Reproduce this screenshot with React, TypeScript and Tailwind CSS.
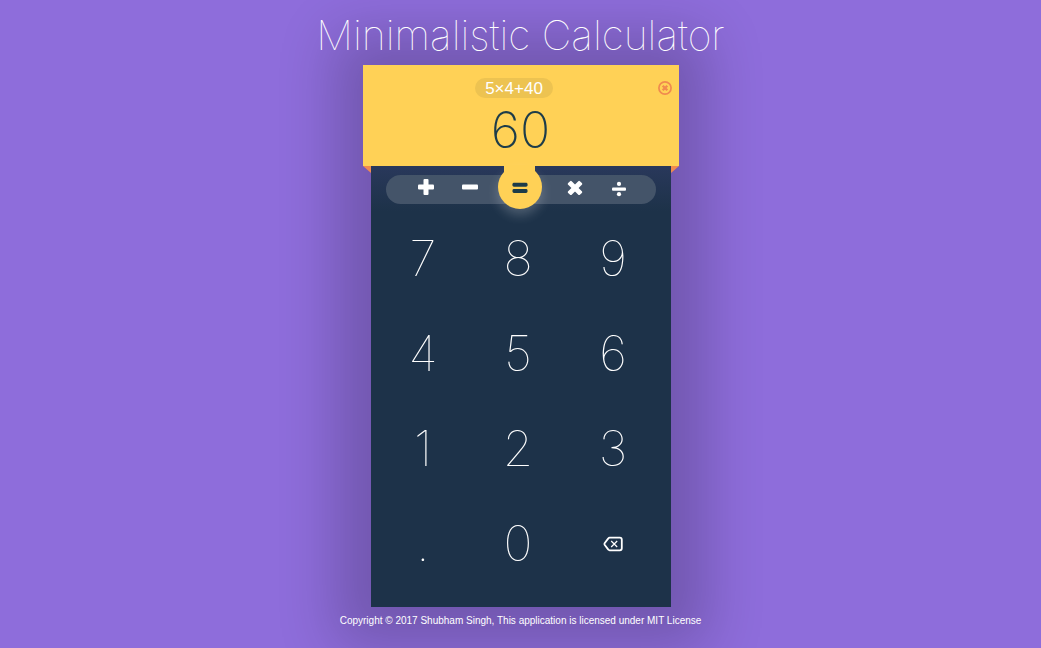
import { useState } from "react";

const KEYS = ["7", "8", "9", "4", "5", "6", "1", "2", "3", ".", "0"];

function PlusIcon() {
  return (
    <svg width="16" height="16" viewBox="0 0 16 16" fill="currentColor" aria-hidden="true">
      <rect x="0" y="5.5" width="16" height="5" rx="1" />
      <rect x="5.5" y="0" width="5" height="16" rx="1" />
    </svg>
  );
}

function MinusIcon() {
  return (
    <svg width="16" height="16" viewBox="0 0 16 16" fill="currentColor" aria-hidden="true">
      <rect x="0" y="5.5" width="16" height="5" rx="1" />
    </svg>
  );
}

function TimesIcon() {
  return (
    <svg width="16" height="16" viewBox="0 -1 16 16" fill="currentColor" aria-hidden="true">
      <g transform="rotate(45 8 8)">
        <rect x="-0.3" y="5.5" width="16.6" height="5" rx="1.1" />
        <rect x="5.5" y="-0.3" width="5" height="16.6" rx="1.1" />
      </g>
    </svg>
  );
}

function DivideIcon() {
  return (
    <svg width="14" height="20" viewBox="0 -4 14 20" fill="currentColor" aria-hidden="true">
      <rect x="0" y="6.4" width="14" height="3.4" rx="1" />
      <circle cx="7" cy="2.9" r="2.1" />
      <circle cx="7" cy="13.2" r="2.1" />
    </svg>
  );
}

function EqualsIcon() {
  return (
    <svg width="16" height="12" viewBox="0 -2 16 12" fill="currentColor" aria-hidden="true">
      <rect x="0.5" y="-0.2" width="15" height="3.9" rx="1.4" />
      <rect x="0.5" y="6" width="15" height="3.9" rx="1.4" />
    </svg>
  );
}

function ClearIcon() {
  return (
    <svg width="14" height="14" viewBox="0 0 14 14" fill="none" stroke="currentColor" aria-hidden="true">
      <circle cx="7" cy="7" r="6.1" strokeWidth="1.7" />
      <path d="M4.7 4.7l4.6 4.6M9.3 4.7l-4.6 4.6" strokeWidth="2.3" />
    </svg>
  );
}

function BackspaceIcon() {
  return (
    <svg width="20" height="16" viewBox="0 0 20 16" fill="none" stroke="currentColor" aria-hidden="true">
      <path
        d="M6.6 1.7h10.2q2 0 2 2v8.6q0 2-2 2H6.6q-.8 0-1.3-.7L1.6 8.7q-.4-.7 0-1.4L5.3 2.4q.5-.7 1.3-.7z"
        strokeWidth="1.8"
        strokeLinejoin="round"
      />
      <path d="M8.2 5l6 6M14.2 5l-6 6" strokeWidth="1.2" />
    </svg>
  );
}

const opButton = "flex h-6 w-11 cursor-pointer items-center justify-center text-white";

export default function App() {
  const [expression, setExpression] = useState("5×4+40");
  const [result, setResult] = useState("60");

  const append = (s: string) => setExpression((e) => e + s);

  const evaluate = () => {
    const parts = expression.match(/[\d.]+|[+\-×÷]/g) ?? [];
    const terms: number[] = [];
    let op = "+";
    for (const part of parts) {
      if (/^[+\-×÷]$/.test(part)) {
        op = part;
        continue;
      }
      const n = Number(part);
      if (op === "+") terms.push(n);
      else if (op === "-") terms.push(-n);
      else if (op === "×") terms.push((terms.pop() ?? 0) * n);
      else terms.push((terms.pop() ?? 0) / n);
    }
    setResult(String(terms.reduce((a, b) => a + b, 0)));
  };

  const clear = () => {
    setExpression("");
    setResult("0");
  };

  return (
    <div className="flex min-h-screen flex-col items-center overflow-hidden bg-[#8e6ddb] font-['Liberation_Sans',Arial,sans-serif]">
      <h1 className="relative z-10 pt-[5px] text-center font-[Inter,sans-serif] text-[41px] leading-[60px] font-thin text-white">
        Minimalistic Calculator
      </h1>

      <main className="w-[300px] bg-[#1d3249] shadow-[0_4px_54px_36px_rgba(0,0,0,0.2)]">
        <section className="relative -mx-2 bg-[#ffd156] pt-[13px] pb-1">
          <div className="flex items-center pr-[7px] pl-2">
            <div className="flex flex-1 justify-center">
              <output className="h-5 rounded-full bg-[#edc351] px-2.5 text-[17px] leading-[22px] text-white">
                {expression}
              </output>
            </div>
            <button type="button" aria-label="Clear" onClick={clear} className="cursor-pointer text-[#f08a4f]">
              <ClearIcon />
            </button>
          </div>
          <output className="block text-center font-[Inter,sans-serif] text-[50px] leading-[64px] font-[150] text-[#1d3c49]">
            {result}
          </output>
          <svg className="absolute top-full left-0" width="8" height="7" viewBox="0 0 8 7" aria-hidden="true">
            <path d="M0 0h8v7z" fill="#f08a4f" />
          </svg>
          <svg className="absolute top-full right-0" width="8" height="7" viewBox="0 0 8 7" aria-hidden="true">
            <path d="M0 0h8L0 7z" fill="#f08a4f" />
          </svg>
        </section>

        <div className="bg-linear-to-b from-[#29385b] to-[#1d3249] px-[15px] pt-[9px] pb-[7px]">
          <div className="relative flex h-[29px] rounded-full bg-[#445469] pr-[15px] pl-[18px]">
            <button type="button" aria-label="Add" onClick={() => append("+")} className={opButton}>
              <PlusIcon />
            </button>
            <button type="button" aria-label="Subtract" onClick={() => append("-")} className={opButton}>
              <MinusIcon />
            </button>
            <div className="relative flex h-6 w-14 justify-center">
              <button
                type="button"
                aria-label="Equals"
                onClick={evaluate}
                className="relative -my-2.5 flex size-11 cursor-pointer items-center justify-center rounded-full bg-[#ffd156] text-[#1d3c49] shadow-[0_6px_12px_rgba(255,255,255,0.22)]"
              >
                <EqualsIcon />
              </button>
              <span className="absolute -top-2.5 h-4 w-[31px] bg-[#ffd156]" />
            </div>
            <div className="ml-auto flex">
              <button type="button" aria-label="Multiply" onClick={() => append("×")} className={opButton}>
                <TimesIcon />
              </button>
              <button type="button" aria-label="Divide" onClick={() => append("÷")} className={opButton}>
                <DivideIcon />
              </button>
            </div>
          </div>
        </div>

        <div className="grid auto-rows-[95px] grid-cols-3 pr-2.5 pb-4 pl-[5px]">
          {KEYS.map((key) => (
            <button
              key={key}
              type="button"
              onClick={() => append(key)}
              className="cursor-pointer font-[Inter,sans-serif] text-[49px] font-thin text-white"
            >
              {key}
            </button>
          ))}
          <button
            type="button"
            aria-label="Backspace"
            onClick={() => setExpression((e) => e.slice(0, -1))}
            className="flex cursor-pointer items-center justify-center text-white"
          >
            <BackspaceIcon />
          </button>
        </div>
      </main>

      <footer className="relative pt-2 text-center text-[10px] leading-3 text-white">
        Copyright © 2017 Shubham Singh, This application is licensed under MIT License
      </footer>
    </div>
  );
}
